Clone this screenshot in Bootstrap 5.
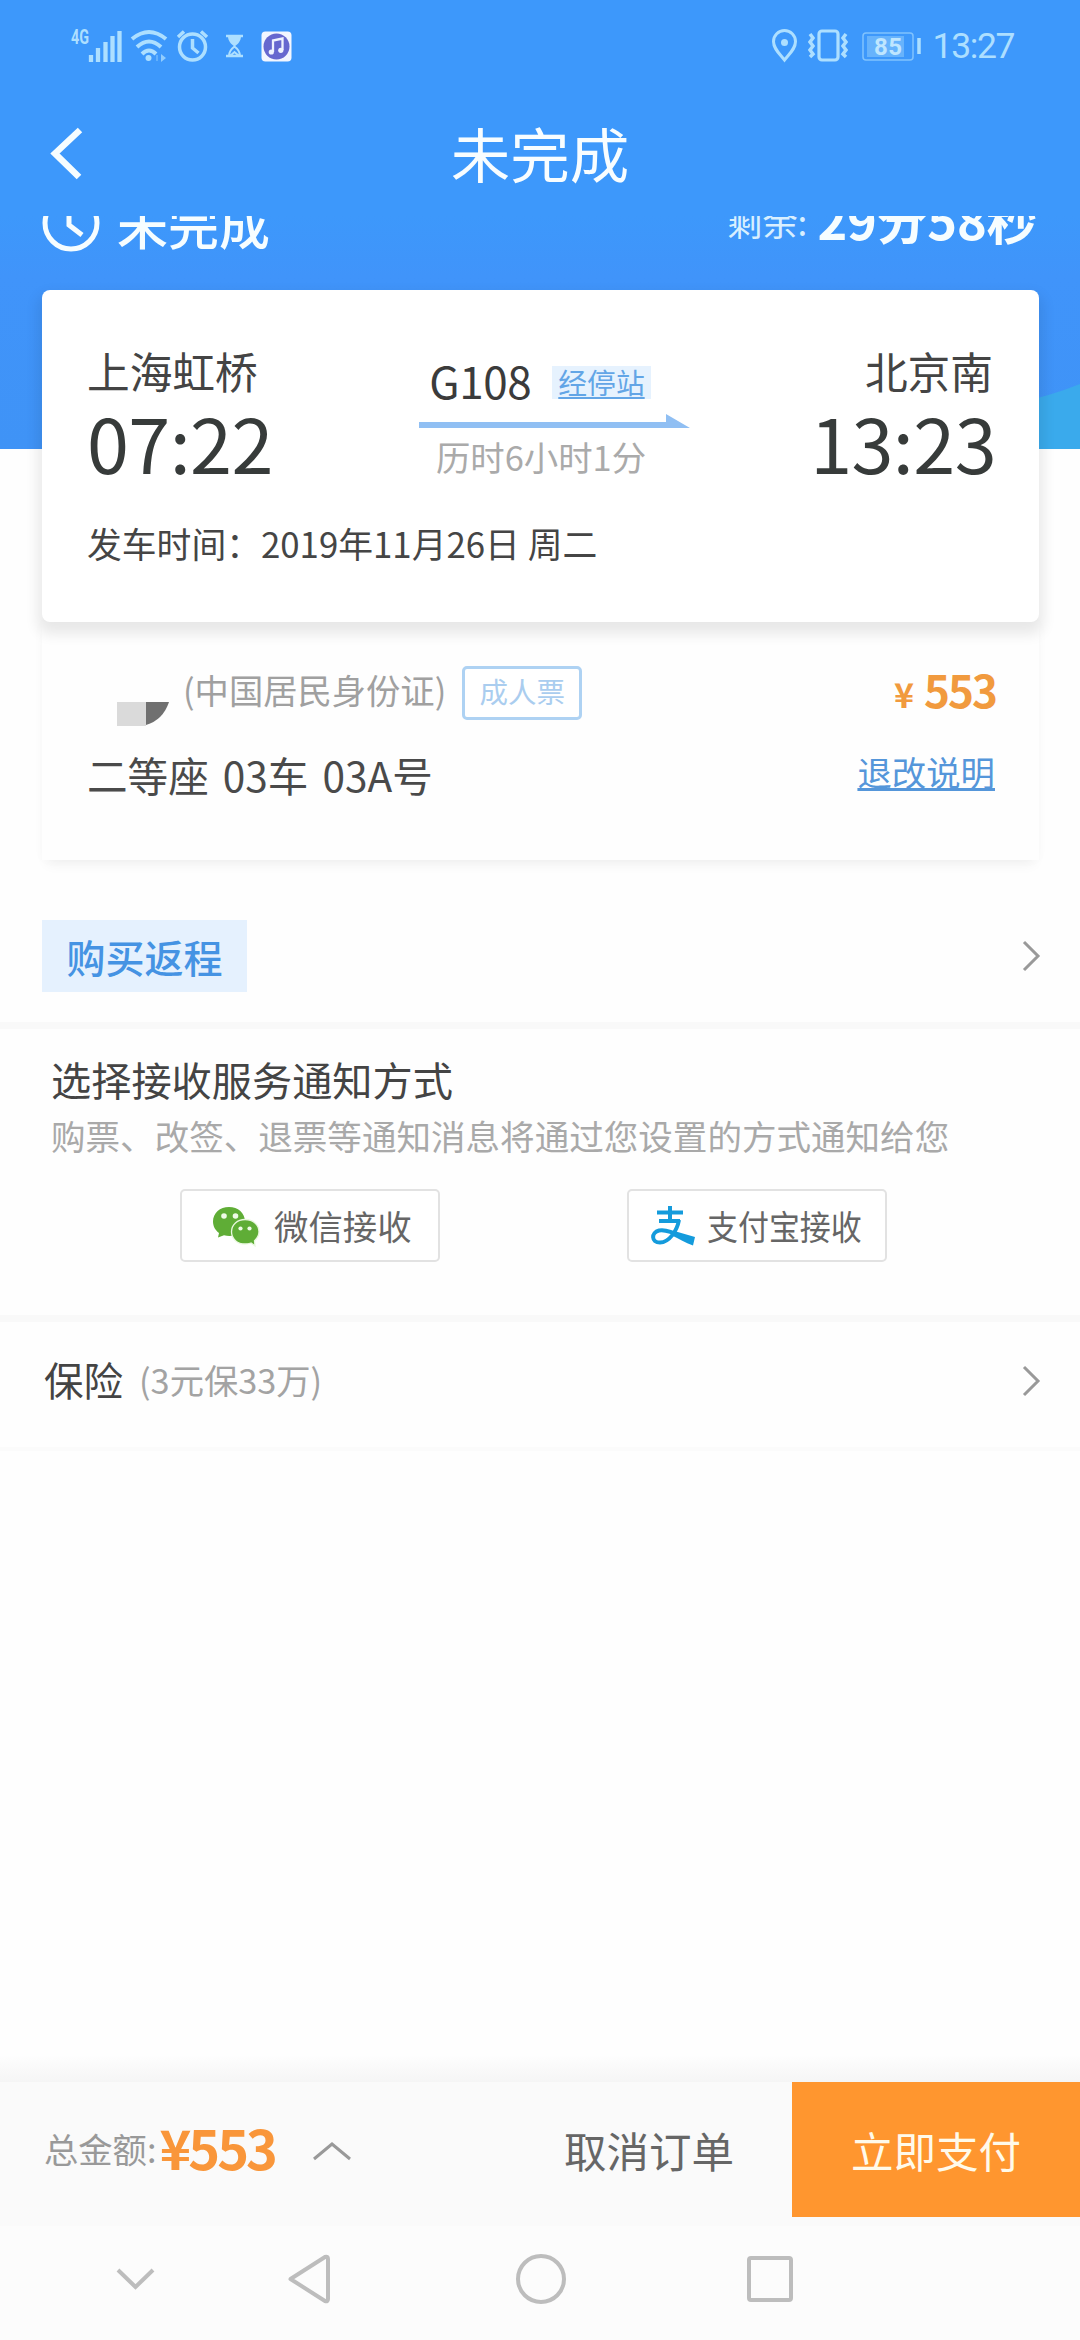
<!DOCTYPE html>
<html lang="zh-CN">
<head>
<meta charset="utf-8">
<meta name="viewport" content="width=device-width, initial-scale=1">
<title>未完成</title>
<link href="https://cdn.jsdelivr.net/npm/bootstrap@5.3.0/dist/css/bootstrap.min.css" rel="stylesheet">
<style>
  body { font-family: "Noto Sans CJK SC", sans-serif; background: #fefefe; color: #3b3b3b; line-height: 1; overflow-x: hidden; }
  .screen { width: 1080px; height: 2340px; overflow: hidden; }
  svg { display: block; flex: none; overflow: visible; }
  span, a { white-space: nowrap; }
  .app-head { height: 216px; background: #3d98fb; }
  .status-row { height: 92px; padding: 0 66px 0 71px; color: #addfff; }
  .clock-text { font: 400 35.5px/36px Roboto, sans-serif; letter-spacing: -1.4px; margin-left: 10px; }
  .title-row { height: 124px; padding: 0 48px; }
  .title-row .page-title { font-size: 59.5px; line-height: 121px; font-weight: 400; color: #f8fdff; }
  .hero { background: linear-gradient(#3d98fb 0, #4094fa 60px, #3f93f6 233px, transparent 233px); }
  .wave { right: 0; top: 166px; }
  .state-row { height: 74px; padding: 0 43px 0 42px; color: #f6fdff; }
  .state-inner { height: 58px; margin-top: -22px; }
  .state-name { font-size: 51px; line-height: 58px; font-weight: 500; margin-left: 17px; }
  .left-label { font-size: 35.2px; line-height: 50px; color: #d8efff; margin: 0 10px 4px 0; }
  .left-time { font-size: 50.5px; line-height: 58px; font-weight: 700; letter-spacing: -.1px; margin-bottom: 11px; }
  .trip { margin: 0 41px 0 42px; height: 332px; border-radius: 8px; padding: 49px 46px 0 45px; box-shadow: 0 8px 14px 4px rgba(0,0,0,.09); z-index: 1; }
  .station { font-size: 42.7px; line-height: 62px; color: #444; }
  .hour { font-size: 75.6px; line-height: 80px; letter-spacing: -.6px; color: #373b3a; margin-right: -3px; }
  .route-top { margin-top: 14px; }
  .train-no { font-size: 44px; line-height: 54px; letter-spacing: -.4px; }
  .stops { font-size: 28.8px; line-height: 32px; height: 33px; padding: 0 6px; margin: 4px 0 0 21px; background: #e6f2fe; color: #62a5e6; text-decoration: underline; text-decoration-thickness: 2px; text-underline-offset: 3px; }
  .arrow { margin: 7px -14px 0 14px; }
  .took { font-size: 34.4px; line-height: 40px; color: #aaa; margin: 6px 0 0 2px; }
  .depart { font-size: 34.8px; line-height: 44px; color: #454545; margin-bottom: 57px; }
  .passenger { margin: 0 41px 0 42px; height: 238px; padding: 42px 44px 0 45px; background: #fefefe; box-shadow: 0 9px 12px -5px rgba(0,0,0,.055), 0 0 14px rgba(0,0,0,.018); }
  .mosaic { margin: 38px 14px -8px 30px; }
  .id-kind { font-size: 34.3px; line-height: 48px; color: #a0a0a0; margin-bottom: 11px; }
  .tag { font-size: 28.5px; line-height: 44px; height: 54px; width: 120px; border: 3px solid #aed2f3; border-radius: 5px; color: #aacdef; background: #fff; margin-bottom: 2px; }
  .price { color: #f19a3e; font-weight: 700; margin-bottom: 5px; }
  .yen { font-size: 34px; line-height: 50px; margin-right: 10px; }
  .amt { font-size: 44px; line-height: 50px; letter-spacing: -2px; margin-right: -1px; }
  .seat-row { margin-top: 24px; }
  .seat { font-size: 40.6px; line-height: 54px; color: #4a4a4a; word-spacing: 5px; }
  .rules { font-size: 34.4px; line-height: 46px; color: #5596da; text-decoration: underline; text-decoration-thickness: 3px; text-underline-offset: 2px; margin-bottom: 8px; }
  .return-row { height: 162px; padding: 60px 40px 0 42px; }
  .return-btn { width: 205px; height: 72px; background: #e5f1fe; color: #4593e3; font-size: 39px; line-height: 66px; font-weight: 500; border-radius: 0; }
  .return-row svg { margin-top: 21px; }
  .divider { height: 7px; background: #f9f9f9; }
  .notice { height: 286px; padding: 22px 51px 0; }
  .notice-title { font-size: 40.2px; line-height: 56px; color: #444; }
  .notice-sub { font-size: 34.55px; line-height: 50px; color: #a9a9a9; margin-top: 3px; }
  .ways { padding-left: 129px; gap: 187px; margin-top: 29px; }
  .way { width: 260px; height: 73px; border: 2px solid #e2e2e2; border-radius: 5px; background: #fff; color: #666; font-size: 34.4px; line-height: 66px; padding: 0 0 2px; }
  .wechat { margin: 3px 15px 0 31px; }
  .alipay { margin: 2px 12px 0 22px; }
  .squeeze { transform: scaleX(.9); transform-origin: 0 50%; }
  .insure { height: 125px; padding: 0 40px 8px 44px; }
  .ins-name { font-size: 39.5px; line-height: 56px; color: #444; margin-bottom: 4px; }
  .ins-note { font-size: 34.3px; line-height: 56px; color: #a3a3a3; margin: 0 0 4px 16px; }
  .last-line { height: 4px; background: #fbfbfb; }
  .bottom-shade { height: 27px; background: linear-gradient(#fefefe, #f5f5f5); }
  .pay-bar { height: 144px; background: #fafafa; }
  .bar-left { padding: 0 58px 0 44px; height: 137px; }
  .sum-label { font-size: 34.3px; color: #999; line-height: 50px; margin-bottom: 6px; }
  .sum { font-size: 54px; line-height: 60px; font-weight: 700; color: #f9963a; letter-spacing: -3px; margin: 0 0 7px 3px; }
  .caret-up { margin-left: 38px; }
  .cancel { font-size: 42.5px; line-height: 60px; color: #666; margin-bottom: 2px; }
  .pay { width: 288px; height: 135px; background: #ff962f; color: #fffaea; font-size: 42.5px; line-height: 58px; border-radius: 0; border: 0; }
  .sys-nav { height: 114px; background: #fcfcfc; padding: 0 0 8px 116px; }
  .nav-back { margin: 0 185px 0 133px; }
  .nav-recent { margin-left: 181px; }
</style>
</head>
<body>
<div class="screen d-flex flex-column">

  <header class="app-head flex-shrink-0">
    <div class="status-row d-flex align-items-center">
      <svg width="222" height="36" viewBox="71 28 222 36" fill="none" stroke="currentColor">
        <text x="71" y="44" font-family="Roboto, sans-serif" font-size="19.500" font-weight="700" textLength="18" lengthAdjust="spacingAndGlyphs" fill="currentColor" stroke="none">4G</text>
        <path d="M91 62v-7M98 62V48M105.500 62V42M112.500 62V36M119.500 62V31" stroke-width="4.300"/>
        <path d="M132 39Q149 25 166 39M137 47Q149 36 161 47M142 54Q149 47 156 54" stroke-width="4"/>
        <circle cx="148.500" cy="58" r="3" fill="currentColor" stroke="none"/>
        <path d="M161 54l5 4-5 4z" fill="currentColor" stroke="none" opacity=".75"/>
        <path d="M157 55v6" stroke-width="2" opacity=".35"/>
        <circle cx="192.500" cy="47" r="13" stroke-width="3.500"/>
        <path d="M192.500 39v9l6 5M178 37l6-5.500M201 31.500l6 5.500" stroke-width="3.500"/>
        <path d="M226 36h17M226 56h17" stroke-width="2.500"/>
        <path d="M228 36h13c0 5-3 8-6.500 10.500C231 44 228 41 228 36z" fill="currentColor" stroke="none"/>
        <path d="M229 56c0-5 2-7 5.500-9.500 3.500 2.500 5.500 4.500 5.500 9.500M230 56l4.500-4 4.500 4" stroke-width="2"/>
        <rect x="261.500" y="31.500" width="30" height="30" rx="4" fill="#f2f6ff" stroke="none"/>
        <circle cx="276.500" cy="46.500" r="13" fill="#6668cf" stroke="none"/>
        <path d="M273 52V40.500l9.500-2V50" stroke="#eef3ff" stroke-width="2.300"/>
        <circle cx="271.300" cy="52" r="2.600" fill="#eef3ff" stroke="none"/><circle cx="280.800" cy="50.300" r="2.600" fill="#eef3ff" stroke="none"/>
      </svg>
      <svg class="ms-auto" width="152" height="36" viewBox="771 28 152 36" fill="none" stroke="currentColor">
        <path d="M784.500 60C779 53 773.500 48.500 773.500 41.500a11 11 0 0 1 22 0c0 7-5.500 11.500-11 18.500z" stroke-width="3"/>
        <circle cx="784.500" cy="42.500" r="3.500" fill="currentColor" stroke="none"/>
        <rect x="819" y="31" width="19" height="29" rx="3" stroke-width="3.200"/>
        <path d="M810 34l3 4-3 4 3 4-3 4 3 4-3 3M846 34l-3 4 3 4-3 4 3 4-3 4 3 3" stroke-width="3.500"/>
        <rect x="863" y="33" width="50" height="27" rx="3" stroke-width="1.500" opacity=".6"/>
        <rect x="867" y="36" width="37" height="21" fill="currentColor" stroke="none" opacity=".38"/>
        <text x="874" y="54.500" font-family="Roboto, sans-serif" font-size="24" font-weight="700" textLength="28" fill="#bfe6ff" stroke="none">85</text>
        <path d="M919 38v16" stroke-width="3.500"/>
      </svg>
      <span class="clock-text">13:27</span>
    </div>
    <div class="title-row d-flex align-items-center position-relative">
      <svg width="35" height="50" viewBox="0 0 35 50" fill="none" stroke="#f6fdff" stroke-width="6.500"><path d="M32 1L7 24.500 31 48"/></svg>
      <div class="page-title position-absolute start-50 translate-middle-x top-0 text-nowrap m-0">未完成</div>
    </div>
  </header>

  <section class="hero position-relative flex-shrink-0">
    <svg class="wave position-absolute" width="60" height="67" viewBox="0 0 60 67"><path d="M0 20Q30 14 60 2V67H0z" fill="#3aaaec"/></svg>
    <div class="state-row overflow-hidden">
      <div class="state-inner d-flex align-items-center">
        <svg width="58" height="58" viewBox="0 0 58 58" fill="none" stroke="currentColor" stroke-width="5"><circle cx="29" cy="29" r="26"/><path d="M27 12v19l13 10"/></svg>
        <span class="state-name">未完成</span>
        <span class="left-label ms-auto">剩余:</span>
        <span class="left-time">29分58秒</span>
      </div>
    </div>

    <div class="trip bg-white position-relative d-flex flex-column">
      <div class="d-flex justify-content-between">
        <div class="d-flex flex-column">
          <span class="station">上海虹桥</span>
          <span class="hour">07:22</span>
        </div>
        <div class="d-flex flex-column align-items-center">
          <div class="route-top d-flex align-items-center">
            <span class="train-no">G108</span>
            <a class="stops">经停站</a>
          </div>
          <svg class="arrow" width="271" height="16" viewBox="0 0 271 16" fill="#90bff3"><path d="M0 8h247V0l24 14H0z"/></svg>
          <span class="took">历时6小时1分</span>
        </div>
        <div class="d-flex flex-column align-items-end">
          <span class="station">北京南</span>
          <span class="hour">13:23</span>
        </div>
      </div>
      <div class="depart mt-auto">发车时间：2019年11月26日 周二</div>
    </div>
  </section>

  <section class="passenger flex-shrink-0">
    <div class="d-flex align-items-center">
      <svg class="mosaic align-self-start" width="52" height="24" viewBox="0 0 52 24"><path d="M0 0h29v24H0z" fill="#dadada"/><path d="M29 0h23Q46 18 29 23z" fill="#707070"/></svg>
      <span class="id-kind">(中国居民身份证)</span>
      <span class="tag text-center ms-3">成人票</span>
      <div class="price ms-auto d-flex align-items-baseline"><span class="yen">¥</span><span class="amt">553</span></div>
    </div>
    <div class="seat-row d-flex align-items-center justify-content-between">
      <span class="seat">二等座 03车 03A号</span>
      <a class="rules">退改说明</a>
    </div>
  </section>

  <section class="return-row d-flex justify-content-between align-items-start flex-shrink-0">
    <button class="return-btn btn p-0">购买返程</button>
    <svg width="18" height="30" viewBox="0 0 18 30" fill="none" stroke="#999" stroke-width="3"><path d="M2 1l14 14L2 29"/></svg>
  </section>

  <div class="divider flex-shrink-0"></div>

  <section class="notice flex-shrink-0">
    <div class="notice-title">选择接收服务通知方式</div>
    <div class="notice-sub text-nowrap">购票、改签、退票等通知消息将通过您设置的方式通知给您</div>
    <div class="ways d-flex">
      <button class="way btn d-flex align-items-center">
        <svg class="wechat" width="46" height="39" viewBox="0 0 46 39"><path d="M16 0C7 0 0 6 0 14.500c0 5 2.500 9 6 11.500L5 30.500l6-2.300c10 2.800 21-2.200 21-13.700C32 6 25 0 16 0z" fill="#5fad36"/><path d="M32 12.500c-7.500 0-13.500 5-13.500 12.300S24.500 37 32 37c2 0 4-.3 6-1l4 2.800-.5-5C44 31.500 46 28.500 46 24.800c0-7.300-6-12.300-14-12.300z" fill="#5fad36" stroke="#e9f8df" stroke-width="1.300"/><g fill="#eefbe6"><circle cx="11" cy="9" r="2.800"/><circle cx="22.500" cy="9" r="2.800"/><circle cx="27.500" cy="21.500" r="2.100"/><circle cx="36.500" cy="21.500" r="2.100"/></g></svg>
        <span>微信接收</span>
      </button>
      <button class="way btn d-flex align-items-center">
        <svg class="alipay" width="44" height="39" viewBox="0 0 44 39" fill="none" stroke="#149bdc"><path d="M6 6.500h26M19 0v15M8 15h21" stroke-width="4"/><path d="M28 14C26 25 18 36.500 9 36.500c-9 0-9-10-1-12 8-1.500 17 3.500 24 7" stroke-width="4"/><path d="M25 25.500l19 5.500-2 8.500C34 36.500 28 33 22 30z" fill="#149bdc" stroke="none"/></svg>
        <span class="squeeze">支付宝接收</span>
      </button>
    </div>
  </section>

  <div class="divider flex-shrink-0"></div>

  <section class="insure d-flex align-items-center flex-shrink-0">
    <span class="ins-name">保险</span><span class="ins-note">(3元保33万)</span>
    <svg class="ms-auto" width="18" height="30" viewBox="0 0 18 30" fill="none" stroke="#999" stroke-width="3"><path d="M2 1l14 14L2 29"/></svg>
  </section>
  <div class="last-line flex-shrink-0"></div>

  <footer class="mt-auto flex-shrink-0">
    <div class="bottom-shade"></div>
    <div class="pay-bar d-flex align-items-start">
      <div class="bar-left d-flex align-items-center flex-grow-1">
        <span class="sum-label">总金额:</span><span class="sum">¥553</span>
        <svg width="38" height="18" viewBox="0 0 38 18" fill="none" stroke="#999" stroke-width="3" class="caret-up"><path d="M1 17L19 2l18 15"/></svg>
        <span class="cancel ms-auto">取消订单</span>
      </div>
      <button class="pay btn p-0">立即支付</button>
    </div>
    <nav class="sys-nav d-flex align-items-center">
      <svg width="39" height="22" viewBox="0 0 39 22" fill="none" stroke="#bdbdbd" stroke-width="4"><path d="M2 2l17.500 17L37 2"/></svg>
      <svg class="nav-back" width="43" height="50" viewBox="0 0 43 50" fill="none" stroke="#bdbdbd" stroke-width="4" stroke-linejoin="round"><path d="M2.500 25L37 3q3-1 3 2v40q0 3-3 2z"/></svg>
      <svg width="50" height="50" viewBox="0 0 50 50" fill="none" stroke="#bdbdbd" stroke-width="4"><circle cx="25" cy="25" r="23"/></svg>
      <svg class="nav-recent" width="46" height="46" viewBox="0 0 46 46" fill="none" stroke="#bdbdbd" stroke-width="4"><rect x="2" y="2" width="42" height="42" rx="2"/></svg>
    </nav>
  </footer>
</div>
<script src="https://cdn.jsdelivr.net/npm/bootstrap@5.3.0/dist/js/bootstrap.bundle.min.js"></script>
</body>
</html>
